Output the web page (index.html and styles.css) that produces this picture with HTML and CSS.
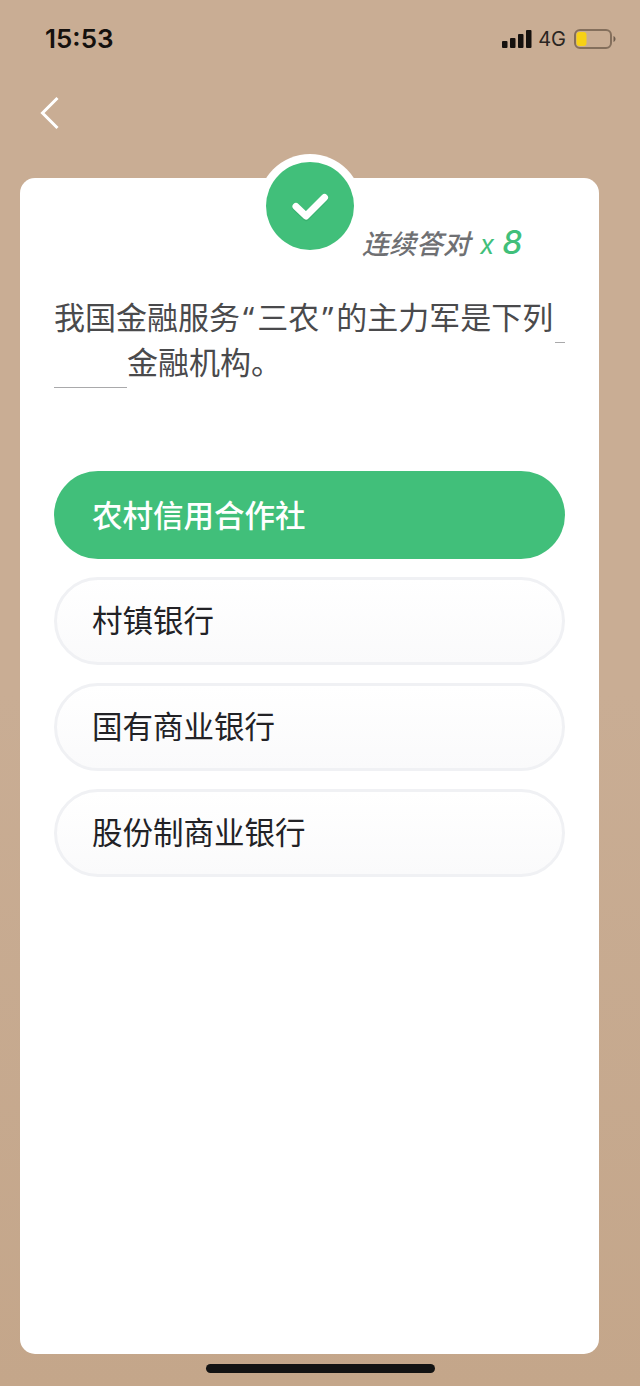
FILE: index.html
```html
<!DOCTYPE html>
<html lang="zh-CN">
<head>
<meta charset="utf-8">
<title>答题</title>
<link rel="stylesheet" href="styles.css">
</head>
<body>
<div class="screen">
  <header class="status">
    <span class="time">15:53</span>
    <div class="indicators">
      <svg class="signal" width="30" height="18" viewBox="0 0 30 18"><rect x="0" y="11" width="5.500" height="7" rx="1"/><rect x="8" y="8" width="5.500" height="10" rx="1"/><rect x="16" y="4" width="5.500" height="14" rx="1"/><rect x="24" y="0" width="5.500" height="18" rx="1"/></svg>
      <span class="net">4G</span>
      <svg class="battery" width="42" height="20" viewBox="0 0 42 20"><rect x="1" y="1" width="36" height="18" rx="5" fill="none" stroke="#846f5c" stroke-width="2"/><rect x="2.500" y="3" width="10" height="14" rx="3" fill="#f7d116"/><path d="M39.500 7v6c1.200-.5 2-1.600 2-3s-.8-2.500-2-3z" fill="#6e5d4e"/></svg>
    </div>
  </header>
  <nav class="nav">
    <svg class="back" width="20" height="34" viewBox="0 0 20 34"><path d="M17.500 2 2.500 17l15 15" fill="none" stroke="#fff" stroke-width="3"/></svg>
  </nav>
  <main class="card">
    <div class="badge">
      <svg width="88" height="88" viewBox="0 0 88 88"><circle cx="44" cy="44" r="44" fill="#41bf7a"/><path d="M30 46 40 55.500 58.500 37" fill="none" stroke="#2fa566" stroke-opacity=".5" stroke-width="7" stroke-linecap="round" stroke-linejoin="round"/><path d="M30 44.500 40 54 58.500 35.500" fill="none" stroke="#fff" stroke-width="7" stroke-linecap="round" stroke-linejoin="round"/></svg>
    </div>
    <div class="streak"><span class="streak-label">连续答对</span><span class="streak-x">x</span><span class="streak-n">8</span></div>
    <p class="question">我国金融服务<span class="quote">“</span>三农<span class="quote">”</span>的主力军是下列<span class="blank blank-a"></span><br><span class="blank blank-b"></span>金融机构。</p>
    <ul class="options">
      <li class="option selected">农村信用合作社</li>
      <li class="option">村镇银行</li>
      <li class="option">国有商业银行</li>
      <li class="option">股份制商业银行</li>
    </ul>
  </main>
  <div class="home-row"><div class="home"></div></div>
</div>
</body>
</html>
```
FILE: styles.css
```css
* { box-sizing: border-box; }
html, body { margin: 0; padding: 0; }
body {
  width: 640px;
  height: 1386px;
  overflow: hidden;
  font-family: "Noto Sans CJK SC", "Noto Sans", sans-serif;
}
.screen {
  height: 1386px;
  display: flex;
  flex-direction: column;
  background: linear-gradient(180deg, #c9ad94 0%, #c9ad94 50%, #c4a68a 100%);
}
.status {
  height: 80px;
  flex: none;
  padding: 22px 24px 0 45px;
  display: flex;
  justify-content: space-between;
  align-items: flex-start;
}
.time {
  font: 600 26px/34px Inter, "Liberation Sans", sans-serif;
  color: #15110e;
}
.indicators {
  display: flex;
  align-items: center;
  height: 34px;
}
.signal { fill: #15110e; margin-right: 6px; }
.net {
  font: 400 20px/24px Inter, "Liberation Sans", sans-serif;
  color: #2a2522;
  margin-right: 8px;
}
.nav {
  height: 98px;
  flex: none;
  padding: 16px 0 0 40px;
}
.back { display: block; }
.card {
  position: relative;
  flex: none;
  height: 1176px;
  margin: 0 41px 0 20px;
  padding: 0 34px;
  background: #fff;
  border-radius: 15px;
}
.badge {
  position: absolute;
  left: 238px;
  top: -24px;
  width: 104px;
  height: 104px;
  padding: 8px;
  border-radius: 50%;
  background: #fff;
}
.badge svg { display: block; }
.streak {
  height: 34px;
  margin-top: 48px;
  padding-left: 308px;
  font-style: italic;
  line-height: 34px;
  white-space: nowrap;
}
.streak-label { font-size: 27px; font-weight: 500; color: #6f7073; }
.streak-x { font: italic 400 26px/34px Inter, sans-serif; color: #41bf7a; margin-left: 10px; }
.streak-n { font: italic 500 32px/34px Inter, sans-serif; color: #41bf7a; margin-left: 8px; }
.question {
  margin: 35px 0 0;
  font-family: "Noto Sans", "Noto Sans CJK SC", sans-serif;
  font-size: 31px;
  line-height: 45px;
  color: #4a4a4c;
  width: 512px;
}
.quote { margin: 0 3px; }
.blank { padding-bottom: 4px; border-bottom: 1px solid #a9a9ab; }
.blank-a { padding-left: 10px; margin-left: 2px; }
.blank-b { padding-left: 73px; }
.options {
  list-style: none;
  margin: 86px 0 0;
  padding: 0;
  width: 511px;
  display: flex;
  flex-direction: column;
  gap: 18px;
}
.option {
  height: 88px;
  padding-left: 35px;
  border: 3px solid #f0f1f4;
  border-radius: 44px;
  background: linear-gradient(180deg, #fff 0%, #fafafb 100%);
  font-size: 30.500px;
  line-height: 78px;
  color: #222226;
}
.option.selected {
  padding-left: 38px;
  border: 0;
  background: #41bf7a;
  color: #fff;
  font-weight: 500;
  line-height: 86px;
}
.home-row {
  flex: none;
  padding: 10px 0 0 206px;
}
.home {
  width: 229px;
  height: 9px;
  border-radius: 5px;
  background: #131313;
}
```
